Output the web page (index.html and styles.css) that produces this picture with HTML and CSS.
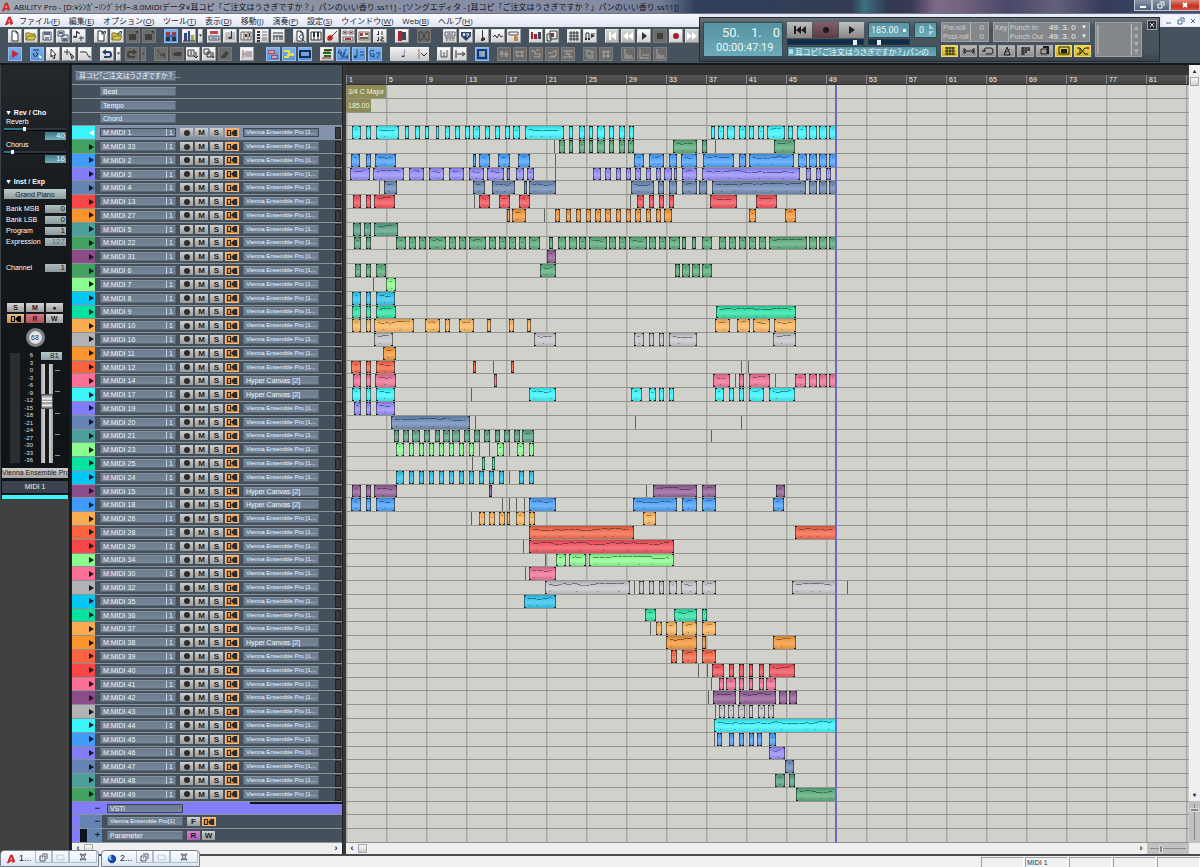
FILE: index.html
```html
<!DOCTYPE html>
<html lang="ja">
<head>
<meta charset="utf-8">
<title>ABILITY Pro</title>
<link rel="stylesheet" href="styles.css">
</head>
<body>
<div class="titlebar">
  <svg class="logo" viewBox="0 0 12 12"><path d="M1 11 5 1h3l3 8-3 2-1-3-4 3z" fill="#d22a2c"/><path d="M5 7l1.500-3L7 7z" fill="#fff"/></svg>
  <span class="title-text">ABILITY Pro - [D:¥ｼﾝｶﾞｰｿﾝｸﾞﾗｲﾀｰ-8.0MIDIデータ¥耳コピ「ご注文はうさぎですか？」パンのいい香り.ss11] - [ソングエディタ - [耳コピ「ご注文はうさぎですか？」パンのいい香り.ss11]]</span>
  <div class="win-buttons">
    <button aria-label="Minimize"><svg viewBox="0 0 12 8"><path d="M3 5h6v2H3z" fill="#fff"/></svg></button>
    <button aria-label="Restore"><svg viewBox="0 0 12 8"><path d="M5 1h4v4M3 3h4v4H3z" fill="none" stroke="#fff"/></svg></button>
    <button class="win-close" aria-label="Close"><svg viewBox="0 0 12 8"><path d="M4 2l4 4M8 2L4 6" stroke="#fff" stroke-width="2"/></svg></button>
  </div>
</div>

<header class="header">
  <div class="header-left">
    <nav class="menubar">
      <svg class="logo" viewBox="0 0 12 12"><path d="M1 11 5 1h3l3 8-3 2-1-3-4 3z" fill="#d22a2c"/><path d="M5 7l1.500-3L7 7z" fill="#fff"/></svg>
      <button>ファイル(<u>F</u>)</button><button>編集(<u>E</u>)</button><button>オプション(<u>O</u>)</button><button>ツール(<u>T</u>)</button><button>表示(<u>D</u>)</button><button>移動(<u>J</u>)</button><button>演奏(<u>P</u>)</button><button>設定(<u>S</u>)</button><button>ウインドウ(<u>W</u>)</button><button>Web(<u>B</u>)</button><button>ヘルプ(<u>H</u>)</button>
    </nav>
    <div class="toolbar" id="toolbar-main"></div>
    <div class="toolbar" id="toolbar-edit"></div>
  </div>

  <section class="transport">
    <div class="lcd counter">
      <div class="counter-bars"><span>50.</span><span>1.</span><span>0</span></div>
      <div class="counter-time">00:00:47:19</div>
    </div>
    <div class="deck">
      <div class="deck-row">
        <div class="deck-keys">
          <button aria-label="Rewind"><svg viewBox="0 0 24 14"><path d="M6 3h2v8H6zM13 3v8L8 7zM18 3v8l-5-4z"/></svg></button>
          <button class="rec" aria-label="Record"><svg viewBox="0 0 24 14"><circle cx="12" cy="7" r="3"/></svg></button>
          <button aria-label="Play"><svg viewBox="0 0 24 14"><path d="M9 3l6 4-6 4z"/></svg></button>
        </div>
        <div class="lcd tempo"><span>185.00</span><i></i></div>
        <div class="lcd key"><span>0</span><svg viewBox="0 0 7 14"><path d="M1 1v5h5zM1 8v5l5-5z" fill="#a8d4dc"/></svg></div>
      </div>
      <div class="deck-row">
        <input class="seek" type="range" aria-label="Song position" value="92">
        <input class="seek seek-tempo" type="range" aria-label="Tempo ratio" value="22">
      </div>
      <div class="lcd song"><i></i><span>耳コピ「ご注文はうさぎですか？」パンの</span></div>
    </div>
    <div class="options">
      <div class="deck-row">
        <dl class="readout roll"><dt>Pre-roll</dt><dd>0</dd><dt>Post-roll</dt><dd>0</dd></dl>
        <div class="readout punch"><span>Key</span><dl><dt>Punch In</dt><dd>49. 3. 0</dd><dd>▼</dd><dt>Punch Out</dt><dd>49. 3. 0</dd><dd>▼</dd></dl></div>
      </div>
      <div class="option-keys" id="option-keys"></div>
    </div>
    <div class="readout meter"><svg viewBox="0 0 47 35"><path d="M2 2v31M37 1v33" stroke="#c8c8c8"/><path d="M40 7l2-3 2 3zM40 4h4M40 15l2-4 2 4zM40 20l2 4 2-4zM40 28l2 3 2-3zM40 32h4" fill="#b4b4b4" stroke="#b4b4b4" stroke-width=".5"/></svg></div>
    <button class="transport-close" aria-label="Close transport"><svg viewBox="0 0 8 8"><path d="M2 2l4 4M6 2L2 6" stroke="#ddd"/></svg></button>
  </section>

  <div class="mdi-buttons">
    <button aria-label="Minimize editor"><svg viewBox="0 0 10 10"><path d="M2 7h5" stroke="#4a678c"/></svg></button>
    <button aria-label="Restore editor"><svg viewBox="0 0 10 10"><path d="M4 2h4v4M2 4h4v4H2z" fill="none" stroke="#4a678c"/></svg></button>
    <button aria-label="Close editor"><svg viewBox="0 0 10 10"><path d="M3 3l4 4M7 3L3 7" stroke="#4a678c"/></svg></button>
  </div>
</header>

<main class="main">
  <aside class="side">
    <div class="strip">
      <h2>▼ Rev / Cho</h2>
      <div class="send"><label for="reverb">Reverb</label><input id="reverb" type="range" max="127" value="40"><output>40</output></div>
      <div class="send"><label for="chorus">Chorus</label><input id="chorus" type="range" max="127" value="16"><output>16</output></div>
      <h2 class="inst">▼ Inst / Exp</h2>
      <button class="patch">Grand Piano</button>
      <div class="field"><label for="msb">Bank MSB</label><input id="msb" value="0"></div>
      <div class="field"><label for="lsb">Bank LSB</label><input id="lsb" value="0"></div>
      <div class="field"><label for="prog">Program</label><input id="prog" value="1"></div>
      <div class="field dim"><label for="expr">Expression</label><input id="expr" value="127"></div>
      <div class="field channel"><label for="chan">Channel</label><input id="chan" value="1"></div>
      <div class="strip-keys">
        <button>S</button><button>M</button><button aria-label="Arm">●</button>
        <button class="thru" aria-label="Thru"><svg viewBox="0 0 12 8"><path d="M1 1h3v1H2v4h2v1H1zM4 1h1v6H4zM8 1v6L5 4zM8 1h3v6H8z"/></svg></button><button class="read">R</button><button>W</button>
      </div>
      <div class="knob"><span>68</span></div>
      <div class="fader">
        <div class="level"></div>
        <ol class="scale"><li>6<li>3<li>0<li>-3<li>-6<li>-9<li>-12<li>-15<li>-18<li>-21<li>-24<li>-27<li>-30<li>-33<li>-36</ol>
        <div class="fader-main">
          <output>81</output>
          <div class="fader-track"><input type="range" aria-label="Volume" max="127" value="81"><div class="ticks"><i></i><i></i><i></i><i></i><i></i></div></div>
        </div>
      </div>
      <div class="out">Vienna Ensemble Pro</div>
      <div class="track-label">MIDI 1</div>
      <div class="track-color"></div>
    </div>
  </aside>

  <section class="tracks">
    <div class="project"><span class="box">耳コピ「ご注文はうさぎですか？ ...</span></div>
    <div class="rows" id="track-rows"></div>
    <div class="hscroll"><b>‹</b><i></i><b class="end">›</b></div>
  </section>

  <section class="editor">
    <div class="ruler-top"></div>
    <div class="ruler" id="ruler"></div>
    <div class="canvas">
      <div class="rows" id="clip-rows"></div>
      <div class="playhead"></div>
    </div>
    <div class="hscroll wide"><b>‹</b><i></i><b class="end">›</b><div class="zoom"><i></i></div></div>
  </section>
  <div class="vscroll"><b>▴</b><i></i><b class="end">▾</b><div class="vzoom"><i></i></div></div>
</main>

<footer class="status"><span></span><span>MIDI 1</span><span></span><span></span><span></span></footer>

<div class="mdi-tabs">
  <div class="mdi-tab"><svg class="logo" viewBox="0 0 12 12"><path d="M1 11 5 1h3l3 8-3 2-1-3-4 3z" fill="#d22a2c"/><path d="M5 7l1.500-3L7 7z" fill="#fff"/></svg><span>1...</span><div class="tab-keys"></div></div>
  <div class="mdi-tab"><svg class="logo" viewBox="0 0 12 12"><circle cx="6" cy="6" r="5" fill="#1747a8"/><path d="M2 2c3-1 4 0 3 2s1 3 3 2L6 7C3 8 1 6 2 2z" fill="#8fd0f4"/></svg><span>2...</span><div class="tab-keys"></div></div>
</div>
<script src="app.js"></script>
</body>
</html>
```
FILE: styles.css
```css
* { box-sizing: border-box; }
html, body { height: 100%; }
body {
  margin: 0;
  display: flex;
  flex-direction: column;
  overflow: hidden;
  background: #3c3c3c;
  font: 7px/9px "Liberation Sans", "Noto Sans CJK JP", sans-serif;
  color: #eef2f6;
}
button, input, select { font: inherit; margin: 0; padding: 0; border: 0; color: inherit; border-radius: 0; }
button { display: flex; align-items: center; justify-content: center; background: none; }
svg { display: block; }
i, b { display: block; font-style: normal; }

/* Title bar */
.titlebar {
  flex: none;
  height: 14px;
  display: flex;
  align-items: center;
  gap: 3px;
  padding-left: 1px;
  background: linear-gradient(90deg, #a3a8b4 0, #8990a4 30%, #858ca4 50%, #747d94 55%, #30405a 58%, #343c54 71%, #3f7080 72%, #303850 74%, #3a3a54 76%, #806a88 78%, #75637f 80%, #4a4868 84%, #64607c 88%, #343c58 92%, #40506c 100%);
  border-bottom: 1px solid #6c7488;
}
.logo { width: 10px; height: 10px; flex: none; }
.title-text {
  font: 8px/12px "Open Sans", "Noto Sans CJK JP", sans-serif;
  color: #10131a;
  white-space: nowrap;
}
.win-buttons { margin-left: auto; align-self: flex-start; display: flex; }
.win-buttons button { width: 18px; height: 11px; border: 1px solid #c0c8d4; border-top: 0; background: linear-gradient(#8c96a8, #54607a); }
.win-buttons svg { width: 12px; height: 8px; }
.win-buttons .win-close { width: 30px; background: linear-gradient(#e08c78, #c03020 60%, #d85040); }

/* Header */
.header {
  flex: none;
  display: grid;
  grid-template-columns: minmax(0, 1fr) auto 40px;
  background: linear-gradient(#e6eaf6 13px, #46525e 13px);
  border-bottom: 2px solid #15181b;
}
.menubar { height: 13px; display: flex; align-items: center; gap: 9px; padding-left: 4px; background: linear-gradient(#fafbff, #dfe4f4); }
.menubar .logo { margin-right: -4px; }
.menubar button { font: 8px/12px "Open Sans", "Noto Sans CJK JP", sans-serif; color: #20242c; white-space: nowrap; }
.menubar u { text-underline-offset: 1px; }
.toolbar { display: flex; gap: 8px; height: 18px; align-items: center; padding-left: 8px; }
.tool-group { display: flex; gap: 2px; }
.tool-group.near { margin-left: -4px; }
.tool-group.far { margin-left: 4px; }
.tool { width: 14px; height: 14px; background: linear-gradient(#fafafa, #d0d0d0); border: 1px solid #e4e4e4; border-right-color: #9a9a9a; border-bottom-color: #909090; color: #303238; }
.tool svg { width: 12px; height: 12px; }
.tool.on { background: linear-gradient(#7fb0ea, #5a92d8); border-color: #8cbcf0; color: #182c50; }
.tool.off { background: #6b6b6b; border-color: #7b7b7b; color: #3f3f3f; }
.tool.drop { width: 5px; }
.tool.drop svg { width: 3px; }
.tool.off.lit { color: #a8a8a8; }
.tool.lit { background: linear-gradient(#d4d4d4, #b8b8b8); color: #fff; }
.tool.off.lit { background: #6b6b6b; }
.note-value { width: 39px; height: 14px; display: flex; position: relative; background: linear-gradient(#f4f4f4, #c8c8c8); color: #222; }
.note-value select { flex: 1; appearance: none; background: none; padding-left: 11px; font: 10px/14px "DejaVu Sans", sans-serif; }
.note-value svg { position: absolute; right: 1px; top: 2px; width: 10px; height: 10px; pointer-events: none; }

/* Transport */
.transport {
  margin: 3px 0 1px;
  display: flex;
  gap: 4px;
  padding: 4px 2px 4px 3px;
  border: 1px solid #252a30;
  background: linear-gradient(#68737c, #4a555f 20%, #46525c 80%, #39434c);
  color: #e9f6f8;
}
.lcd { background: linear-gradient(#5793a1, #6cabb9); border: 1px solid #2f4c55; font-family: Roboto, sans-serif; }
.counter { width: 80px; padding: 2px 2px 1px 18px; display: flex; flex-direction: column; justify-content: space-between; }
.counter-bars { display: flex; justify-content: space-between; font-size: 13px; line-height: 16px; }
.counter-time { margin-left: -6px; font-size: 11px; line-height: 14px; white-space: nowrap; }
.deck { width: 150px; display: flex; flex-direction: column; justify-content: space-between; }
.deck-row { display: flex; gap: 4px; }
.deck-keys { display: flex; gap: 1px; }
.deck-keys button { width: 25px; height: 16px; background: linear-gradient(#c0bfc0, #8a8788); color: #222; }
.deck-keys svg { width: 24px; height: 14px; fill: #1c1c1e; }
.deck-keys .rec { background: linear-gradient(#80606a, #5c3a46); }
.tempo { width: 42px; display: flex; align-items: center; justify-content: space-between; font-size: 9px; padding: 0 3px 0 2px; }
.tempo i { width: 3px; height: 3px; background: #e9f6f8; }
.key { flex: 1; display: flex; align-items: center; justify-content: flex-end; gap: 4px; font-size: 9px; padding-right: 1px; }
.key svg { width: 7px; height: 14px; }
.seek { appearance: none; width: 77px; height: 6px; background: #0e2c4c; border: 1px solid #27333f; }
.seek-tempo { width: 42px; }
.seek::-webkit-slider-thumb { appearance: none; width: 4px; height: 5px; background: #e8f0f4; }
.song { height: 11px; display: flex; align-items: center; gap: 2px; white-space: nowrap; font: 8px/9px "Noto Sans CJK JP", sans-serif; font-feature-settings: "palt"; }
.song i { width: 4px; height: 5px; flex: none; background: #b4dce4; margin-left: 1px; }
.readout { background: #85888b; border: 1px solid #9da1a5; margin: 0; color: #cfd1d3; }
.roll { width: 48px; height: 20px; display: grid; grid-template-columns: 1fr 18px; line-height: 9px; }
.roll dt, .punch dt { padding-left: 1px; }
dl, dt, dd { margin: 0; white-space: nowrap; }
.roll dd { text-align: right; padding-right: 4px; border-left: 1px solid #b8babc; font-size: 8px; }
.punch { width: 97px; height: 20px; display: flex; }
.punch > span { width: 15px; border-right: 1px solid #a8abae; padding-left: 1px; }
.punch dl { flex: 1; display: grid; grid-template-columns: 1fr 32px 8px; line-height: 9px; }
.punch dd { font-size: 8px; color: #f2f2f2; }
.punch dd:nth-of-type(even) { font-size: 6px; }
.options { display: flex; flex-direction: column; justify-content: space-between; }
.option-keys { display: flex; gap: 2px; }
.option-keys button { width: 17px; height: 12px; background: linear-gradient(#b8b8b8, #8c8c8c); border: 1px solid #a9a9a9; color: #1c1c1c; }
.option-keys .on { background: linear-gradient(#f0d850, #d0ae2c); border-color: #e8d878; }
.option-keys svg { width: 14px; height: 10px; }
.meter { width: 47px; height: 35px; }
.transport-close { width: 10px; height: 10px; margin: -2px 0 0 1px; border: 1px solid #a0a4a8; background: #2c3036; }
.transport-close svg { width: 8px; height: 8px; }
.mdi-buttons { display: flex; height: 13px; justify-content: space-between; padding: 1px 1px 0 3px; }
.mdi-buttons button { width: 12px; height: 11px; background: #f3f6fc; }
.mdi-buttons svg { width: 10px; height: 10px; }

/* Main area */
.main { flex: 1; min-height: 0; display: grid; grid-template-columns: 71px 272px minmax(0, 1fr) 11px; border-bottom: 2px solid #4c4c50; }

/* Channel strip */
.side { background: #404040; border-right: 2px solid #18191b; }
.strip { height: 434px; padding: 43px 3px 0; background: linear-gradient(#23282c, #16191c 35%, #0f1216); border-left: 1px solid #3b4248; display: flex; flex-direction: column; }
.strip h2 { margin: 0 0 0 1px; font: bold 7px/9px "Liberation Sans", sans-serif; color: #fff; }
.send { display: grid; grid-template-rows: 10px 5px 8px; }
.send label { padding-left: 2px; color: #fff; }
.send input, .seek { display: block; }
.send input { appearance: none; width: 100%; height: 3px; margin-top: 1px; border-bottom: 1px solid #000; background: linear-gradient(90deg, #2c7888 30%, #30363c 30%); }
.send #chorus { background: linear-gradient(90deg, #2c7888 12%, #30363c 12%); }
.send input::-webkit-slider-thumb { appearance: none; width: 3px; height: 4px; background: #eef4f6; }
.send output { justify-self: end; width: 21px; background: linear-gradient(#3c7486, #76aebc); text-align: right; padding-right: 1px; font-size: 8px; line-height: 8px; }
.strip .inst { margin-top: 14px; }
.patch { height: 10px; margin: 3px 0 4px; flex: none; background: linear-gradient(#c0cacb, #8f9c9e); color: #14181a; }
.field { display: flex; height: 11px; justify-content: space-between; align-items: center; }
.field label { padding-left: 2px; color: #fff; }
.field input { width: 21px; height: 8px; background: linear-gradient(#aebcbe, #8b999c); color: #111; text-align: right; font-size: 8px; line-height: 8px; padding-right: 1px; }
.field.dim input { color: #5c686c; }
.field.channel { margin-top: 15px; }
.strip-keys { display: grid; grid-template-columns: repeat(3, 1fr); gap: 2px; margin: 30px 3px 0; }
.strip-keys button { height: 9px; background: linear-gradient(#d4d4d4, #9c9c9c); color: #222; font-weight: bold; }
.strip-keys .thru { background: linear-gradient(#ecc088, #c08c54); }
.strip-keys .read { background: linear-gradient(#d87880, #b05058); color: #501018; }
.strip-keys svg { width: 12px; height: 8px; }
.knob { align-self: center; flex: none; width: 19px; height: 19px; margin: 5px 0 5px; border-radius: 50%; border: 3px solid #7d8388; background: radial-gradient(#fff, #c8c8c8); color: #222; display: flex; align-items: center; justify-content: center; }
.fader { display: flex; height: 112px; padding: 0 4px 0 5px; gap: 1px; }
.level { width: 13px; border: 1px solid #14171a; background: #2a2e31; }
.scale { margin: 0; padding: 0; list-style: none; width: 11px; flex: none; display: flex; flex-direction: column; justify-content: space-between; text-align: right; font-size: 6px; line-height: 7px; color: #e0e0e0; }
.fader-main { flex: 1; padding-left: 7px; display: flex; flex-direction: column; gap: 4px; }
.fader-main output { width: 21px; height: 8px; background: linear-gradient(#b4c8ca, #8ca2a6); color: #222; font-size: 8px; line-height: 8px; text-align: right; padding-right: 3px; }
.fader-track { flex: 1; display: flex; gap: 2px; }
.fader-track input { appearance: none; writing-mode: vertical-lr; direction: rtl; width: 12px; height: 99px; background: linear-gradient(90deg, #a8a8a8, #d8d8d8 35%, #1a1a1a 35%, #1a1a1a 65%, #d8d8d8 65%, #a0a0a0); }
.fader-track input::-webkit-slider-thumb { appearance: none; width: 12px; height: 15px; border: 1px solid #555; background: linear-gradient(#777, #f4f4f4 30%, #888 45%, #fff 50%, #888 60%, #eee 80%, #666); }
.ticks { width: 5px; padding: 6px 0 8px; display: flex; flex-direction: column; justify-content: space-between; }
.ticks i { height: 1px; background: #8c9094; }
.out { height: 10px; margin: 4px -2px 3px; flex: none; background: linear-gradient(#d0d0d0, #a4a4a4); color: #16181a; text-align: center; white-space: nowrap; }
.track-label { height: 12px; flex: none; background: #3a4450; line-height: 12px; text-align: center; margin: 0 -2px 2px; }
.track-color { height: 4px; flex: none; background: #3cf4fc; margin: 0 -2px; }

/* Track list and clip rows share one row grid */
.tracks, .editor { display: flex; flex-direction: column; min-width: 0; min-height: 0; }
.tracks { background: #44505c; border-right: 1px solid #222; border-left: 1px solid #222; }
.rows { flex: 1; min-height: 0; display: grid; grid-template-rows: repeat(55, minmax(0, 1fr)); }
.project { height: 20px; flex: none; padding: 6px 3px; border-bottom: 1px solid #8a929a; }
.box { width: 76px; height: 9px; padding: 0 2px; background: linear-gradient(#6c7b8c, #76879a); border: 1px solid #5a6878; border-top-color: #8492a2; display: flex; justify-content: space-between; align-items: center; line-height: 7px; color: #f0f5fa; white-space: nowrap; flex: none; }
.project .box { width: 101px; height: 10px; padding: 0 3px; line-height: 8px; font-feature-settings: "palt"; }
.box.long { font-size: 6px; }
.track { display: flex; align-items: center; border-bottom: 1px solid #8a929a; min-height: 0; }
.track.global { padding-left: 28px; }
.swatch { align-self: stretch; width: 23px; flex: none; background: var(--c); display: flex; align-items: center; justify-content: flex-end; }
.swatch svg { width: 7px; height: 6px; fill: #14181c; }
.track .box { margin-left: 5px; }
.track.global .box { margin-left: 0; }
.track .box span + span { border-left: 1px solid #c8d0d8; padding-left: 2px; }
.keys { display: flex; gap: 2px; margin: 0 4px 0 4px; }
.key-btn { width: 13px; height: 9px; background: linear-gradient(#cfcfcf, #9a9a9a); color: #202020; font-size: 8px; font-weight: bold; line-height: 9px; }
.key-btn.thru { width: 14px; background: linear-gradient(#f0a860, #d88430); border: 1px solid #f4b87c; }
.key-btn.write { background: linear-gradient(#d080d0, #b458b8); }
.key-btn svg { width: 12px; height: 8px; fill: #2c2c2c; }
.track .keys + .box { margin-left: 0; }
.lamp { width: 6px; align-self: stretch; margin: 1px 1px 0 auto; background: #38383a; border: 1px solid #222; }
.track.selected { background: #8291ac; }
.track.selected .box { border-color: #3c4858; }
.branch { align-self: stretch; width: 30px; flex: none; display: flex; align-items: center; justify-content: flex-end; padding-right: 2px; font-size: 9px; font-weight: bold; color: #16203c; }
.track.bus { background: linear-gradient(#10121c, #10121c) right top / 92px 2px no-repeat #827dfa; }
.track.bus .box { border-color: #3c4466; }
.track.plugin .branch { background: linear-gradient(90deg, #827dfa 8px, #6584b4 8px); }
.track.param .branch { background: linear-gradient(90deg, #827dfa 8px, #0c1420 8px, #0c1420 15px, #6584b4 15px); }

/* Editor */
.editor { border-left: 3px solid #38383a; background: #d0d1cb; }
.ruler-top { height: 10px; flex: none; background: #343434; }
.ruler { height: 10px; flex: none; display: flex; background: linear-gradient(#565656, #444); border-bottom: 1px solid #333; overflow: hidden; }
.ruler span { width: 40px; flex: none; border-left: 1px solid #888; padding-left: 2px; line-height: 10px; font-size: 7px; }
.canvas { flex: 1; min-height: 0; display: flex; position: relative; background: repeating-linear-gradient(90deg, #a6a7a3 0 1px, #bcbdb8 1px 2px, #d0d1cb 2px 40px); overflow: hidden; }
.canvas .rows { min-width: 0; }
.lane { position: relative; border-bottom: 1px solid #92938f; min-height: 0; }
.event { display: inline-block; height: 100%; padding: 2px 2px; background: #8d8c58; color: #f4f2d8; font-size: 7px; line-height: 9px; vertical-align: top; }
.clip {
  position: absolute;
  top: 0;
  bottom: 0;
  border: solid rgba(20, 24, 28, .55);
  border-width: 0 1px;
  background:
    linear-gradient(#222, #222) left top / 2px 1px no-repeat,
    linear-gradient(#222, #222) right top / 2px 1px no-repeat,
    linear-gradient(#222, #222) left bottom / 2px 1px no-repeat,
    linear-gradient(#222, #222) right bottom / 2px 1px no-repeat,
    linear-gradient(rgba(20, 24, 28, .18), rgba(255, 255, 255, .02) 25%, rgba(255, 255, 255, .22) 60%, rgba(20, 24, 28, .1)),
    var(--c);
  background-origin: border-box;
  overflow: hidden;
}
.clip.hair { border: 0; background: #60625f; }
.clip svg { height: 12px; width: 100%; }
.playhead { position: absolute; top: 0; bottom: 0; left: 489px; width: 2px; background: #6a6ac8; }

/* Scroll bars */
.hscroll { height: 11px; flex: none; display: flex; align-items: center; background: #efefef; color: #222; font-size: 9px; }
.hscroll b { width: 12px; text-align: center; }
.hscroll > i { width: 9px; height: 9px; background: linear-gradient(#f8f8f8, #d0d0d0); border: 1px solid #a8a8a8; }
.hscroll .end { margin-left: auto; }
.zoom { width: 42px; height: 11px; background: linear-gradient(#888, #888) center / 36px 1px no-repeat #c0c0c0; }
.zoom i { width: 4px; height: 8px; margin: 2px 0 0 12px; background: #888; border: 1px solid #ddd; }
.vscroll { display: flex; flex-direction: column; align-items: center; background: #efefef; color: #222; font-size: 6px; }
.vscroll b { height: 12px; line-height: 12px; }
.vscroll > i { width: 9px; height: 9px; background: linear-gradient(#f8f8f8, #d0d0d0); border: 1px solid #a8a8a8; }
.vscroll .end { margin-top: auto; }
.vzoom { width: 11px; height: 42px; margin-bottom: 11px; background: linear-gradient(#888, #888) center / 1px 36px no-repeat #c0c0c0; }
.vzoom i { width: 9px; height: 4px; margin: 7px 1px 0; background: #888; border: 1px solid #ddd; }

/* Status bar */
.status { flex: none; height: 11px; display: flex; justify-content: flex-end; gap: 1px; padding-top: 1px; background: #f0f0f0; color: #333; }
.status span { width: 43px; border: 1px solid #a0a0a0; border-right-color: #fff; border-bottom: 0; padding-left: 1px; font-size: 7px; line-height: 9px; }

.mdi-tabs { position: fixed; left: 0; bottom: 0; display: flex; gap: 2px; }
.mdi-tab { width: 99px; height: 17px; display: flex; align-items: center; gap: 3px; padding: 0 5px; border: 1px solid #76808c; border-radius: 4px 4px 0 0; background: linear-gradient(#fbfdff, #d8e6f4); color: #222; font-size: 9px; }
.tab-keys { display: flex; margin-left: auto; align-self: flex-start; }
.tab-keys button { width: 17px; height: 12px; border: 1px solid #b0bcc8; border-top: 0; }
.tab-keys button:last-child { width: 28px; }
.tab-keys svg { width: 10px; height: 10px; }
```
FILE: app.js
```javascript
// Toolbar glyphs on a 12x12 grid: s = stroked path, f = filled path.
const s = (d, c = 'currentColor', w = 1) => `<path d="${d}" fill="none" stroke="${c}" stroke-width="${w}"/>`;
const f = (d, c = 'currentColor') => `<path d="${d}" fill="${c}"/>`;
const doc = f('M3 1h4l2 2v8H3z', '#fff') + s('M3 1h4l2 2v8H3zM7 1v2h2');
const folder = f('M1 3h4l1 1h4v6H1z', '#d8c850') + s('M1 10V3h4l1 1h4v1M1 10l2-4h8l-2 4z', '#7a7028');
const disk = s('M2 2h8v8H2z', '#4a5878') + f('M3 2h6v3H3z', '#5a6a88') + f('M4 7h4v3H4z', '#889');
const arrow = f('M8 1h3v3zM6 4l3-3v1L7 5z', '#3c5078');
const G = {
  doc, folder, disk,
  disks: s('M1 1h6v5H1zM5 5h6v6H5z', '#4a5878') + f('M2 2h4v2H2zM6 8h4v3H6z', '#5a6478'),
  noteAdd: f('M3 1h1v6a2 1 0 1 1-1-1zM4 1l3 2v1L4 3z') + s('M6 8h5M8 6v5', '#345'),
  docOut: doc + arrow, folderOut: folder + arrow, diskOut: f('M2 4h7v6H2z') + f('M8 1h3v3z', '#333'),
  track: f('M1 2h4v3H1zM7 2h4v3H7z', '#a33') + f('M1 7h4v4H1zM7 7h4v4H7z', '#234') + s('M1 6h10'),
  bars: f('M1 3h3v8H1zM5 1h2v10H5z', '#348') + f('M8 5h3v6H8z', '#aa3') + s('M0 11h12'),
  drop: f('M0 4h4L2 7z'),
  list: f('M2 1h8v3H2z', '#b45') + s('M1 6h10v4H1zM3 8h6', '#456'),
  note: s('M1 3h10M1 5h10M1 7h10M1 9h10', '#999') + f('M7 1h1v7a2 1 0 1 1-1-1z'),
  staff: s('M1 2h10v8H1zM4 2v8M8 2v8', '#666') + f('M5 4h2v3H5zM9 3h1v4H9z', '#723'),
  lines: s('M1 2h3M1 5h3M1 8h3M1 11h3', 'currentColor', 2) + s('M6 2h5M6 5h5M6 8h5M6 10h5', '#777'),
  drum: s('M1 3h10M1 6h10M2 6v4M5 6v4M8 6v4M10 6v4'),
  search: doc + s('M7 5a2 2 0 1 0 1 0zM8 9l3 3', '#345', 1),
  piano: f('M1 2h10v8H1z', '#fff') + s('M1 2h10v8H1zM4 2v8M8 2v8') + f('M3 2h2v5H3zM7 2h2v5H7z'),
  guitar: s('M6 6l5-5', '#733', 1) + f('M2 6l3-1 2 2-1 3-3 1-2-2z', '#b22'),
  chord: s('M1 1h4v3H1zM7 1h4v3H7zM1 7h10v4H1z', '#666') + f('M2 2h2v1H2zM8 2h2v1H8zM3 8h6v2H3z', '#a33'),
  pads: s('M1 2h10v8H1z', '#765') + f('M2 3h3v3H2zM7 3h3v2H7z', '#944') + f('M2 7h8v2H2z', '#665'),
  note12: f('M4 1h1v4H3V4h1zM4 7h1v4H3v-1h1z') + s('M8 1v4M7 7h2v2H7v2h3', '#333'),
  media: f('M2 1h4v10H2z', '#a23') + f('M6 2h4v8H6z', '#445'),
  cross: s('M1 2h3l4 8h3M1 10h3l4-8h3M1 2v8M11 2v8'),
  mixer: s('M1 2h10v4H1zM1 8h10M3 9v2M6 9v2M9 9v2M3 4h6', '#556'),
  badge: f('M1 2h10v4l-5 5-5-5z', '#2c4468') + s('M3 6l1-3 1 3M6 4h3L7 7', '#fff', 1),
  clar: f('M6 0h1v7l2 1v2l-2 1H5V9l1-1z'),
  wave: s('M1 7l2-2 2 3 2-4 2 3 2-1'),
  hand: s('M1 2h9v3H1z', '#555') + f('M6 5l2 1 2 1v4H6z', '#b84'),
  mark: f('M1 2h2v7H1zM4 4h3v5H4z', '#923') + f('M8 2h3v7H8z', '#445'),
  frame: s('M4 1h7v8H4zM1 4h4v7H1z', '#343') + f('M5 3h3v4H5z', '#927'),
  grid: s('M1 3h10M1 6h10M1 9h10M3 1v10M6 1v10M9 1v10'),
  notes: s('M2 8V3h3v5M7 4h4', 'currentColor', 1) + f('M7 4l4 2-4 2zM1 8h2v2H1zM4 8h2v2H4z'),
  first: f('M3 2h2v8H3zM10 2v8L5 6z'), rew: f('M6 2v8L1 6zM11 2v8L6 6z'), play: f('M4 2l5 4-5 4z'),
  stop: f('M3 3h6v6H3z'), rec: f('M6 3a3 3 0 1 1 0 6 3 3 0 0 1 0-6z', '#a01c2c'), ff: f('M1 2v8l5-4zM6 2v8l5-4z'),
  redPlay: f('M3 2l7 4-7 4z', '#c22b38'),
  trace: s('M2 2h6M3 5a2 2 0 1 0 3 0M5 4l5 6') + f('M7 6l4 3-2 2z', '#fff'),
  cursor: f('M4 1l5 6H6l2 4-1 0-2-3-1 1z', '#fff') + s('M4 1l5 6H7l1 3-1 1-2-4-1 2z'),
  plus: s('M4 1v6M1 4h6', '#345') + s('M7 5l4 4-2 0v2z'),
  step: s('M1 4h6l3 5h2'),
  undo: s('M3 4h5q2 0 2 3 0 2-2 2H3', '#23406a', 2) + f('M5 1v6L1 4z', '#23406a'),
  redo: s('M9 4H4Q2 4 2 7q0 2 2 2h5', 'currentColor', 2) + f('M7 1v6l4-3z'),
  wand: s('M2 2l4 4M7 6l3 3M5 8l5-3') + f('M6 6h4v4z'),
  rabbit: f('M1 6l4-2 5 0 1 2-2 2H4z'),
  copy: s('M1 2h6v6H1zM3 4h2M3 6h2') + s('M9 4v6M7 8l2 2 2-2'),
  copy2: s('M1 1h5v5H1zM4 4h4v5H4z') + s('M10 4v6M8 8l2 2 1-2'),
  pen: f('M2 9l5-6 3 2-4 5H2z'),
  roll: s('M2 2v8M2 6h9M4 4h7M4 8h7', '#8a6878'),
  rolls: f('M1 2h7v4H1zM4 7h7v4H4z', '#a24a64') + s('M2 4h5M5 9h5', '#fff'),
  wires: s('M1 3h5v3h5M1 9h4V7h6', '#e4e04c', 2),
  film: s('M1 3h10v6H1z', 'currentColor', 2),
  books: s('M3 2h8M2 5h8M3 8h7', '#262', 2) + s('M1 10h9M3 3h6', '#721', 1),
  meter: s('M3 1L1 5h4M4 3v5M9 1L4 11M8 5L6 9h5M10 7v4', '#204878'),
  tempo: s('M4 1v7M7 4h4M7 7h4', '#204878') + f('M1 8l3-1v3H1z', '#204878'),
  gseven: s('M5 3Q1 1 1 5t4 4V6H3M7 5h4L8 10', '#204878'),
  loc: s('M3 2v7h6M9 2v7M6 4v5', '#555'), goto: s('M2 2v8M3 6h8M8 4l3 2-3 2'),
  panel: s('M2 2h8v8H2z', '#19396c', 2) + f('M5 4h3v4H5z', '#c0a860'),
  ev1: s('M1 6h10M4 3v6M8 3v6M2 4h3M7 8h3'), ev2: s('M1 4h9M2 8h8M3 3v6M8 3v6'), ev3: s('M1 3h4v3h5v3H4M6 2h4'),
  ev4: s('M2 5h4l4-3v6H5M3 9h6'), ev5: s('M1 3h10M3 6h6M1 9h10M4 3l4 6'), ev6: s('M2 2l8 2M3 3v4M8 3v4M2 8h8M4 10h5'),
  ev7: s('M2 4h8M2 8h8M4 2v8M8 2v8'), ev8: s('M3 1v9h8M5 8h5M5 6v3'), ev9: s('M2 1v9h9M4 7h7')
};

const toolButton = (spec) => {
  const [name, state = ''] = spec.split(':');
  if (name === 'select') {
    return `<div class="note-value"><select aria-label="Note value"><option>♩</option></select><svg viewBox="0 0 10 10">${s('M1 0v10', '#777')}${s('M3 4l3 3 3-3')}</svg></div>`;
  }
  const box = name === 'drop' ? '0 0 4 12' : '0 0 12 12';
  return `<button class="tool ${name === 'drop' ? 'drop ' : ''}${state.replace('+', ' ')}" aria-label="${name}"><svg viewBox="${box}">${G[name]}</svg></button>`;
};
const fillToolbar = (id, groups) => {
  document.getElementById(id).innerHTML = groups.map((g) => {
    const cls = g[0] === '<' ? ' near' : g[0] === '>' ? ' far' : '';
    return `<div class="tool-group${cls}">${g.replace(/^[<>]/, '').split(' ').map(toolButton).join('')}</div>`;
  }).join('');
};
fillToolbar('toolbar-main', [
  'doc folder disk disks noteAdd', 'docOut folderOut diskOut:off diskOut:off', 'track:on', '<bars drop',
  '<list note staff lines drum', 'search piano guitar chord pads note12', 'media', 'cross:off',
  '>mixer badge clar wave hand', 'mark frame', 'grid notes', 'first:lit rew:lit play stop:off rec ff:lit'
]);
fillToolbar('toolbar-edit', [
  'redPlay:on', 'trace:on cursor plus step', 'undo drop', '<redo:off drop:off', 'wand:off rabbit:off copy copy2 pen:off',
  'roll', '>rolls:on wires:on film:on', 'books meter:on tempo:on gseven:on', 'select', 'loc goto', 'panel:on',
  'ev1:off+lit ev2:off+lit ev3:off+lit ev4:off+lit ev5:off+lit', 'ev6:off+lit ev7:off+lit', 'ev8:off+lit ev9:off+lit ev8:off+lit'
]);

const optionIcons = [
  ['on', s('M2 2h10M2 5h10M2 8h10M4 1v8M7 1v8M10 1v8')], ['', s('M2 2v6M12 2v6M2 5h10M4 3L2 5l2 2M10 3l2 2-2 2')],
  ['', s('M5 8h5q2 0 2-3T10 2H5Q3 2 3 5M1 4l2 2 2-2', 'currentColor', 1)], ['', s('M4 9l3-8 3 8zM5 7l5-4')],
  ['', s('M2 2h9M2 4h9M2 6h6M2 8h4M4 1v8M7 1v6M10 1v4')], ['', s('M3 3h6v5H3z') + s('M10 1v7M5 1h6', 'currentColor', 2)],
  ['on', s('M2 1h10v7H2z') + f('M4 3h6v4H4z')], ['on', s('M1 2h3l5 6h3M1 8h3l5-6h2M4 2v6') + f('M11 1h2v2h-2z', '#c22')]
];
document.getElementById('option-keys').innerHTML = optionIcons
  .map(([c, g], n) => `<button class="${c}" aria-label="Option ${n + 1}"><svg viewBox="0 0 14 10">${g}</svg></button>`).join('');

document.querySelectorAll('.tab-keys').forEach((el) => {
  el.innerHTML = ['M2 4h5v5H2zM4 2h5v5M4 6h1', 'M2 3h7v5H2z', 'M2 2h2l1 2 1-2h2L6 5l2 3H6L5 6 4 8H2l2-3z']
    .map((d, n) => `<button aria-label="Tab control ${n + 1}"><svg viewBox="0 0 10 10">${s(d, n === 1 ? '#c4ccd4' : '#556')}</svg></button>`).join('');
});

const C = {
  cyan: '#3cf4fc', green: '#42a262', blue: '#409cfc', violet: '#827dfa', slate: '#6584b4', red: '#f64648', orange: '#fb962e',
  teal: '#4ca09c', plum: '#8c4c88', lime: '#8cfb90', sky: '#04c8f4', mint: '#04e2a0', amber: '#fcac50', grey: '#b2b2b4',
  coral: '#fc6440', pink: '#fc7098'
};
// Each track: number, colour, clips as start-end in canvas units (10 per bar); a lone start is an empty marker clip.
const head = '6-14 20-24 30-48';
const tail = '463-470 473-480 483-490';
const tracks = [
  [1, 'cyan', `6-14 20-24 30-52 59-62 69-73 79-82 90-92 99-103 109-113 119-123 127-133 139-143 149-153 159-163 167-173 179-217 223-226 233-238 243-246 251-258 263-267 273-278 283-287 365-368 372-377 381-388 393-399 403-407 412-417 421-438 442-446 451-460 ${tail}`],
  [33, 'green', '208 213-218 223-226 233-238 243-246 251-258 263-267 273-278 282-287 327-350 356-360 369 428-448'],
  [2, 'blue', `5-13 20-24 29-49 127-129 133-143 152-163 172-183 209 288-297 303-317 323-330 335-350 357-387 393-399 403-447 452-460 ${tail}`],
  [3, 'violet', '4-23 27-57 63-77 83-97 103-117 123-137 141-157 161-163 170-177 181-187 209 247-254 259-264 270-274 280-284 289-294 300-304 310-314 318-325 328-330 336-350 356-453 460-464 470-474 480-484'],
  [4, 'slate', `33 38-50 127-138 146-168 178-180 183-209 285-307 312-317 323-330 336-350 353-360 366-459 ${tail}`],
  [13, 'red', '7-14 20-24 28-48 128 133-143 153-163 173-183 284 291-297 303-307 313-317 323-327 364-390 410-430'],
  [27, 'orange', '161-163 166-179 198 209-213 220-224 230-234 240-244 249-254 259-264 270-274 280-284 289-294 300-304 310-314 318-325 403-409 439-449'],
  [5, 'teal', '7-14 18-24 28-51'],
  [22, 'green', `8-14 20-24 50-59 63-69 73-79 83-99 103-109 113-119 123-139 143-149 153-159 163-169 173-179 183-193 203-206 212-219 223-230 233-239 243-260 263-269 273-279 283-300 303-309 313-319 323-333 336-339 346-349 356-365 373-379 383-389 393-399 403-409 413-419 423-460 ${tail}`],
  [31, 'plum', '201-209'],
  [6, 'green', '9-14 20-24 30-39 194-209 329-333 336-343 346-353 356-365'],
  [7, 'lime', '27 40-49'],
  [8, 'sky', head],
  [9, 'mint', '6-14 20-24 30-49 370-449'],
  [10, 'amber', '6-14 20-24 28-67 79-93 99-103 113-127 141-144 163-167 181-184 369-383 391-403 407-423 428-449'],
  [16, 'grey', '28-46 188-209 288-297 303-307 313-317 323-350 427-449'],
  [11, 'orange', '37-49'],
  [12, 'coral', '5-14 20-24 30-48 127-129 147 165-167 395 402'],
  [14, 'pink', `7-14 20-24 29-49 148-150 367-383 389 393-397 403-423 429 449-459 ${tail}`],
  [17, 'cyan', `${head} 125 183-209 285-295 303-309 313-317 323-327 369-377 383-387 393-397 403-417 423-448`],
  [19, 'violet', '8-14 20-24 30-48'],
  [20, 'slate', '45-123 129 289 395'],
  [21, 'teal', '48-52 57-62 66-73 78-83 89-93 97-103 106-113 118-123 128-133 138-143 149-153 158-163 168-173 176-187 365'],
  [23, 'lime', '50-57 63-67 73-77 83-87 93-97 103-107 113-117 123-127 133 143 151-157 163 171-177 183-187'],
  [25, 'mint', '126 136-138 146-148'],
  [24, 'sky', '50-57 63-67 73-77 83-87 93-97 103-107 113-117 123-127 133-137 143-147 153-157 163 173-177 183-187'],
  [15, 'plum', '6-14 20-24 28-50 143-145 300 307-350 356-369 430-438'],
  [18, 'blue', '5-14 20-24 30-48 156 163 170 178 183-209 287-330 336-350 356-369 427-437'],
  [26, 'amber', '125 133-138 143-148 153-158 161-163 170-178 183-188 297-309'],
  [28, 'coral', '183-287 449-490'],
  [29, 'red', '177 183-327'],
  [34, 'lime', '199 210-219 223-239 243-327'],
  [30, 'pink', '179 183-209'],
  [32, 'grey', '199-283 288 293-297 303-307 313-317 323-330 335-350 356-369 446-490 501'],
  [35, 'sky', '178-209'],
  [36, 'mint', '299-309 328-350 356-360'],
  [37, 'amber', '304 310-315 320-330 336-350 356-369'],
  [38, 'orange', '320-350 356-359 427-449'],
  [39, 'coral', '325-330 336-350 356-369'],
  [40, 'red', '352 361 366-377 383-387 393-397 403-406 413-417 423-448'],
  [41, 'pink', '365 373-377 380-389 393-397 403-406 413-417 420-429'],
  [42, 'plum', '362 367-389 393-429 433-440 443-450'],
  [43, 'grey', '369 373-378 382-387 392-398 403-406 412-418 422-427'],
  [44, 'cyan', '368-490'],
  [45, 'blue', '368 371-375 383-387 393-397 403-407 411-415 423-429'],
  [46, 'violet', '423-438'],
  [47, 'slate', '439-447'],
  [48, 'teal', '429-438 443-448'],
  [49, 'green', '450-490']
];
const clipTint = { teal: '#5aa286', slate: '#6e8ab4', green: '#5cab7a', red: '#f0525c', plum: '#946096', sky: '#34c4ec', mint: '#30e2a4', grey: '#c6c6ca', pink: '#ee7298', orange: '#f4983c', coral: '#f46648', violet: '#948cf8', amber: '#fab660', blue: '#4ca0f8' };
const hyper = new Set([14, 17, 15, 18, 38]);

const thru = '<button class="key-btn thru" aria-label="Thru"><svg viewBox="0 0 12 8"><path d="M1 1h3v1H2v4h2v1H1zM4 1h1v6H4zM8 1v6L5 4zM8 1h3v6H8z"/></svg></button>';
const dot = '<button class="key-btn" aria-label="Record arm"><svg viewBox="0 0 12 8"><circle cx="6" cy="4" r="3"/></svg></button>';
const trackRow = ([num, color], n) => `
  <div class="track${n ? '' : ' selected'}" style="--c:${C[color]}">
    <div class="swatch"><svg viewBox="0 0 7 6">${n ? '<path d="M1 0l5 3-5 3z"/>' : '<path d="M6 0L1 3l5 3z" fill="#fff"/>'}</svg></div>
    <div class="box"><span>M:MIDI ${num}</span><span>1</span></div>
    <div class="keys">${dot}<button class="key-btn">M</button><button class="key-btn">S</button>${thru}</div>
    ${hyper.has(num) ? '<div class="box"><span>Hyper Canvas [2]</span></div>' : '<div class="box long"><span>Vienna Ensemble Pro [1...</span></div>'}
    <div class="lamp"></div>
  </div>`;
document.getElementById('track-rows').innerHTML =
  ['Beat', 'Tempo', 'Chord'].map((t) => `<div class="track global"><div class="box">${t}</div></div>`).join('') +
  tracks.map(trackRow).join('') +
  '<div class="track bus"><div class="branch">−</div><div class="box">VSTi</div></div>' +
  `<div class="track plugin"><div class="branch">−</div><div class="box long">Vienna Ensemble Pro[1]</div><div class="keys"><button class="key-btn">F</button>${thru}</div></div>` +
  '<div class="track param"><div class="branch">+</div><div class="box">Parameter</div><div class="keys"><button class="key-btn write">R</button><button class="key-btn">W</button></div></div>';

// Note preview strokes, repeatable for each clip.
const notes = (start, width) => {
  let seed = start * 7919 + width * 31;
  const rand = (n) => { seed = (seed * 1103515245 + 12345) % 2147483648; return Math.floor(seed / 65536) % n; };
  let d = '';
  if (width < 8) return `M2 ${3 + rand(3)}h${width - 4}`;
  let y = 3;
  for (let x = 3; x < width - 4;) {
    const len = 1 + rand(6);
    d += `M${x} ${y}h${Math.min(len, width - 4 - x)}`;
    y = Math.max(2, Math.min(4, y + rand(3) - 1));
    x += len + rand(2);
  }
  for (let x = 4 + rand(6); x < width - 4; x += 8 + rand(20)) d += `M${x} 10h1`;
  return d;
};
const clip = (span) => {
  const [a, b] = span.split('-').map(Number);
  if (b === undefined) return `<div class="clip hair" style="left:${a}px;width:1px"></div>`;
  const w = b - a + 1;
  return `<div class="clip" style="left:${a}px;width:${w}px">${w > 4 ? `<svg viewBox="0 0 ${w} 12" preserveAspectRatio="none"><path d="${notes(a, w)}" transform="translate(0 .5)" stroke="#1c2830" stroke-opacity=".55" fill="none"/></svg>` : ''}</div>`;
};
document.getElementById('clip-rows').innerHTML =
  '<div class="lane"><span class="event">3/4 C Major</span></div><div class="lane"><span class="event">185.00</span></div><div class="lane"></div>' +
  tracks.map(([, color, spans]) => `<div class="lane" style="--c:${clipTint[color] || C[color]}">${spans.split(' ').map(clip).join('')}</div>`).join('') +
  '<div class="lane"></div><div class="lane"></div><div class="lane"></div>';

document.getElementById('ruler').innerHTML = Array.from({ length: 22 }, (_, n) => `<span>${n < 21 ? n * 4 + 1 : ''}</span>`).join('');
```
